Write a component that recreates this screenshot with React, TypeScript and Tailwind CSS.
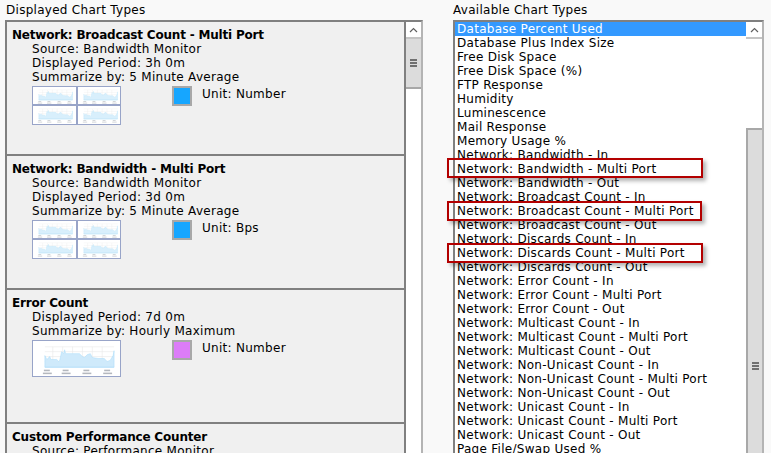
const available = [
  'Database Percent Used',
  'Database Plus Index Size',
  'Free Disk Space',
  'Free Disk Space (%)',
  'FTP Response',
  'Humidity',
  'Luminescence',
  'Mail Response',
  'Memory Usage %',
  'Network: Bandwidth - In',
  'Network: Bandwidth - Multi Port',
  'Network: Bandwidth - Out',
  'Network: Broadcast Count - In',
  'Network: Broadcast Count - Multi Port',
  'Network: Broadcast Count - Out',
  'Network: Discards Count - In',
  'Network: Discards Count - Multi Port',
  'Network: Discards Count - Out',
  'Network: Error Count - In',
  'Network: Error Count - Multi Port',
  'Network: Error Count - Out',
  'Network: Multicast Count - In',
  'Network: Multicast Count - Multi Port',
  'Network: Multicast Count - Out',
  'Network: Non-Unicast Count - In',
  'Network: Non-Unicast Count - Multi Port',
  'Network: Non-Unicast Count - Out',
  'Network: Unicast Count - In',
  'Network: Unicast Count - Multi Port',
  'Network: Unicast Count - Out',
  'Page File/Swap Used %',
]

const displayed = [
  {
    title: 'Network: Broadcast Count - Multi Port',
    lines: ['Source: Bandwidth Monitor', 'Displayed Period: 3h 0m', 'Summarize by: 5 Minute Average'],
    color: 'bg-[#16a6ff]',
    unit: 'Unit: Number',
    multi: true,
  },
  {
    title: 'Network: Bandwidth - Multi Port',
    lines: ['Source: Bandwidth Monitor', 'Displayed Period: 3d 0m', 'Summarize by: 5 Minute Average'],
    color: 'bg-[#16a6ff]',
    unit: 'Unit: Bps',
    multi: true,
  },
  {
    title: 'Error Count',
    lines: ['Displayed Period: 7d 0m', 'Summarize by: Hourly Maximum'],
    color: 'bg-[#dc7cf8]',
    unit: 'Unit: Number',
    multi: false,
  },
  {
    title: 'Custom Performance Counter',
    lines: ['Source: Performance Monitor'],
    color: '',
    unit: '',
    multi: false,
  },
]

function MiniChart({ className, faint }: { className: string; faint?: boolean }) {
  const label = faint ? '#c4c8cc' : '#b4b8be'
  return (
    <svg viewBox="0 0 88 36" preserveAspectRatio="none" className={className}>
      <rect x="0" y="0" width="88" height="36" fill="#ffffff" />
      {[6, 11, 16, 21, 26].map((y) => (
        <line key={y} x1="12" x2="82" y1={y} y2={y} stroke="#e8e8e8" strokeWidth="0.6" />
      ))}
      {[20, 30, 40, 50, 60, 70].map((x) => (
        <line key={x} x1={x} x2={x} y1="6" y2="27" stroke="#e8e8e8" strokeWidth="0.6" />
      ))}
      <path
        d="M12 15 L14 19 L17 16 L18 19 L24 19 L26 21 L27 20 L29 11 L31 13 L32 9 L33 13 L40 13 L47 13 L50 16 L52 17 L55 14 L58 13 L60 17 L66 18 L72 18 L75 21 L78 20 L81 15 L82 10 L82 27 L12 27 Z"
        fill={faint ? '#d8effc' : '#cfeafb'}
        stroke="#a6dcfa"
        strokeWidth="0.5"
      />
      <line x1="12" x2="82" y1="27" y2="27" stroke="#b9e2fa" strokeWidth="0.8" />
      {[10, 29, 50, 71].map((x) => (
        <g key={x}>
          <rect x={x + 1} y="29.5" width="6" height="1.6" fill={label} />
          <rect x={x} y="32.5" width="9" height="1.6" fill={label} />
        </g>
      ))}
    </svg>
  )
}

function ScrollButton() {
  return (
    <div className="flex h-[17px] shrink-0 items-center justify-center border-b-2 border-[#c4c4c4] bg-white">
      <svg width="9" height="6" viewBox="0 0 9 6" fill="none">
        <path d="M1 5 L4.5 1.5 L8 5" stroke="#606060" strokeWidth="1.2" />
      </svg>
    </div>
  )
}

function Grip() {
  return (
    <div className="flex flex-col gap-px">
      <div className="h-0.5 w-[7px] bg-[#707070]" />
      <div className="h-0.5 w-[7px] bg-[#707070]" />
      <div className="h-0.5 w-[7px] bg-[#707070]" />
    </div>
  )
}

function Highlight({ className }: { className: string }) {
  return (
    <div
      className={`absolute h-5 border-[2px] border-[#b30000] shadow-[3px_3px_4px_rgba(0,0,0,0.3)] ${className}`}
    />
  )
}

export default function App() {
  return (
    <div className="relative flex h-[453px] w-[771px] gap-[30px] overflow-hidden bg-[#f9f9f9] pl-[5px] font-['DejaVu_Sans',sans-serif] text-[12px] leading-[14px] tracking-[0.28px] text-black">
      <div className="w-[418px] shrink-0">
        <div className="h-5 pl-px pt-[3px]">Displayed Chart Types</div>
        <div className="flex h-[433px] overflow-hidden border-t-2 border-l-2 border-r-2 border-t-[#808080] border-l-[#808080] border-r-[#b4b4b4]">
          <div className="w-[399px] shrink-0 border-r-2 border-[#808080] bg-[#f0f0f0]">
            {displayed.map((item) => (
              <div key={item.title} className="h-[134px] border-b-2 border-[#808080] pl-[5px] pt-[6px]">
                <div className="font-bold tracking-[-0.19px]">{item.title}</div>
                <div className="pl-5">
                  {item.lines.map((line) => (
                    <div key={line}>{line}</div>
                  ))}
                  {item.unit && (
                    <div className="mt-[2px] flex">
                      {item.multi ? (
                        <div className="grid h-[37px] w-[89px] grid-cols-2">
                          {[0, 1, 2, 3].map((i) => (
                            <div key={i} className="border border-[#98a4c8] bg-white">
                              <MiniChart className="block h-full w-full" faint />
                            </div>
                          ))}
                        </div>
                      ) : (
                        <div className="h-[37px] w-[89px] border border-[#98a4c8] bg-white">
                          <MiniChart className="block h-full w-full" />
                        </div>
                      )}
                      <div className={`ml-[51px] h-5 w-5 border-2 border-[#a8a8a8] ${item.color}`} />
                      <div className="ml-[10px] pt-px">{item.unit}</div>
                    </div>
                  )}
                </div>
              </div>
            ))}
          </div>
          <div className="flex flex-1 flex-col bg-white">
            <ScrollButton />
            <div className="flex h-[50px] shrink-0 items-center justify-center border-b-2 border-[#a8a8a8] bg-[#dcdcdc]">
              <Grip />
            </div>
          </div>
        </div>
      </div>

      <div className="w-[311px] shrink-0">
        <div className="h-5 pt-[3px]">Available Chart Types</div>
        <div className="flex h-[433px] overflow-hidden border-t-2 border-l-2 border-r-2 border-t-[#808080] border-l-[#808080] border-r-[#b4b4b4] bg-white">
          <div className="w-[291px] shrink-0">
            {available.map((name, i) => (
              <div
                key={name}
                className={`h-3.5 whitespace-nowrap pl-0.5 ${i === 0 ? 'bg-[#3399ff] text-white' : ''}`}
              >
                {name}
              </div>
            ))}
          </div>
          <div className="flex w-4 shrink-0 flex-col">
            <ScrollButton />
            <div className="h-[89px] shrink-0 bg-white" />
            <div className="flex flex-1 flex-col items-center border-t-2 border-l-2 border-[#a8a8a8] bg-[#dcdcdc] pt-[232px]">
              <Grip />
            </div>
          </div>
        </div>
      </div>

      <Highlight className="left-[447px] top-[158px] w-[256px]" />
      <Highlight className="left-[447px] top-[201px] w-[255px]" />
      <Highlight className="left-[447px] top-[243px] w-[256px]" />
    </div>
  )
}
